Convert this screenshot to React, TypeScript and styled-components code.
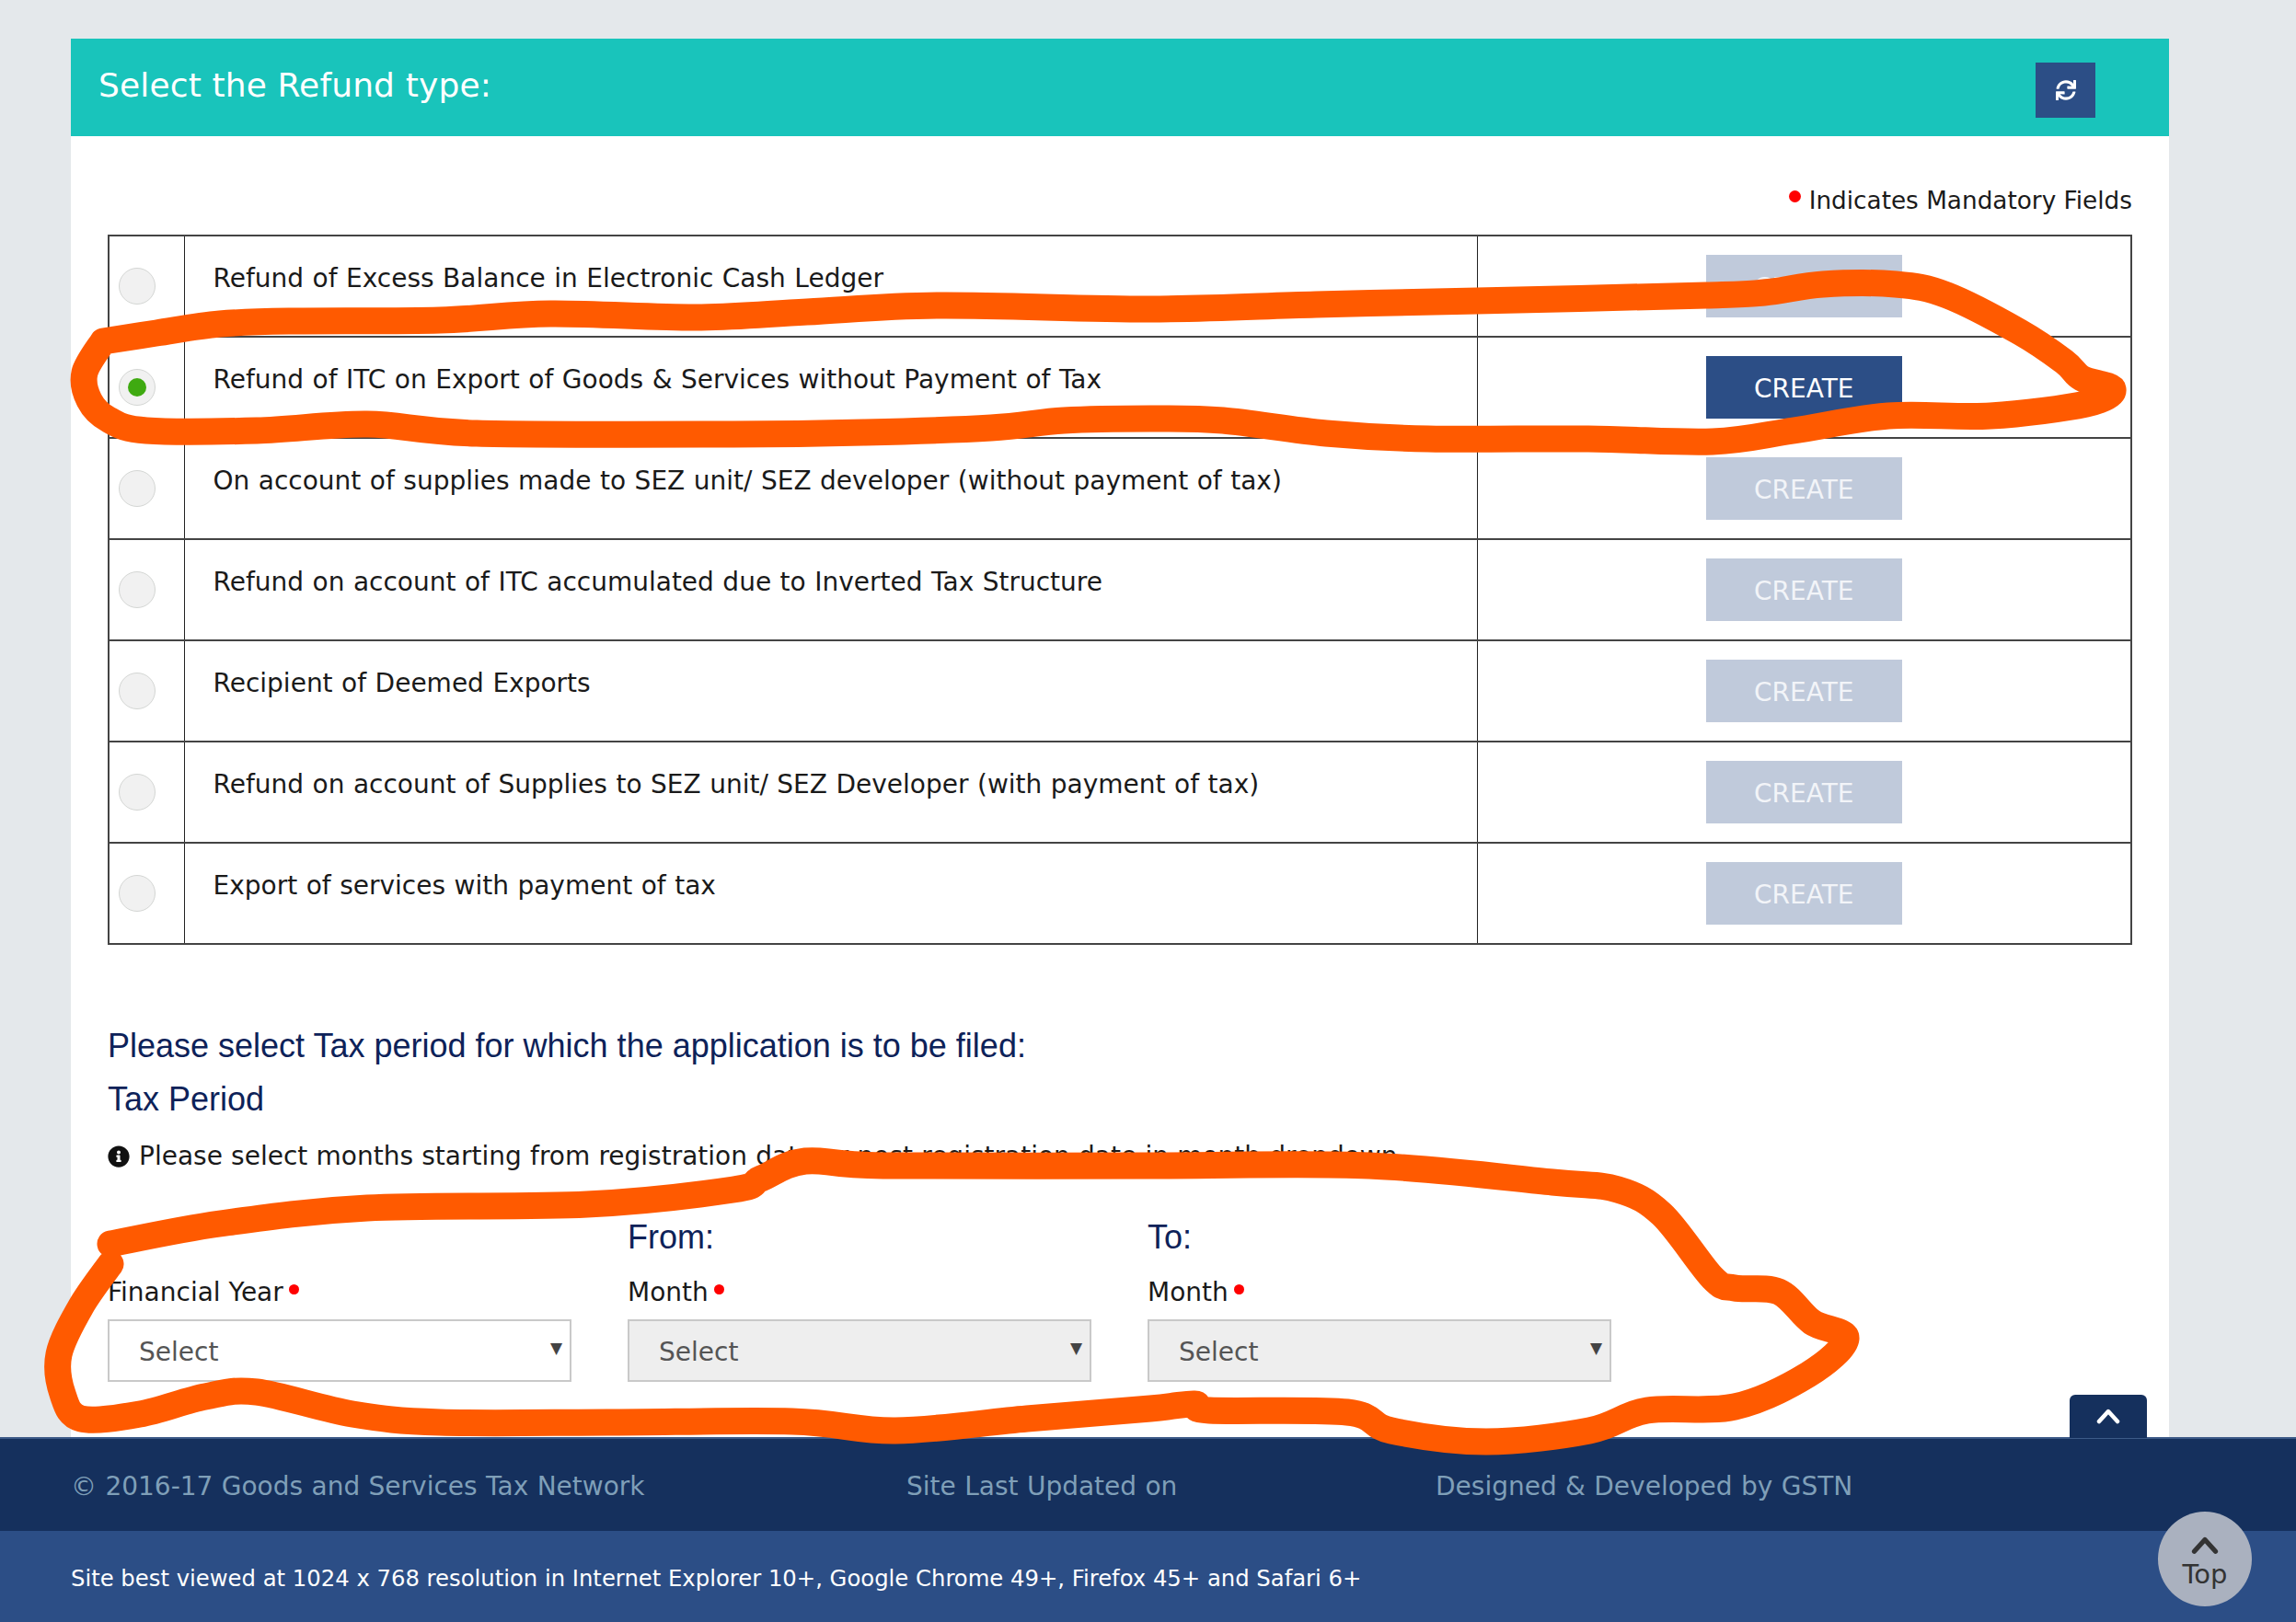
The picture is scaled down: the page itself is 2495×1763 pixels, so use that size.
import React from "react";
import styled, { createGlobalStyle } from "styled-components";
import { FaInfoCircle, FaSync } from "react-icons/fa";

const REFUND_TYPES = [
  "Refund of Excess Balance in Electronic Cash Ledger",
  "Refund of ITC on Export of Goods & Services without Payment of Tax",
  "On account of supplies made to SEZ unit/ SEZ developer (without payment of tax)",
  "Refund on account of ITC accumulated due to Inverted Tax Structure",
  "Recipient of Deemed Exports",
  "Refund on account of Supplies to SEZ unit/ SEZ Developer (with payment of tax)",
  "Export of services with payment of tax",
];

const SELECTED_ROW = 1;

const RING_TOP: number[][] = [
  [112, 371], [170, 362], [239, 352], [320, 349], [478, 348], [598, 341], [758, 345], [877, 339],
  [1021, 332], [1250, 336], [1430, 331], [1605, 327], [1854, 321], [1917, 318], [1981, 309], [2060, 309],
  [2116, 321], [2195, 361], [2243, 393], [2262, 411], [2296, 423], [2267, 439], [2163, 452],
  [2052, 452], [1949, 468], [1861, 480], [1726, 477], [1552, 477], [1441, 471], [1329, 457],
  [1250, 455], [1156, 457], [1077, 465], [940, 470], [797, 472], [518, 471], [399, 461], [279, 468],
  [159, 468], [118, 456], [97, 435], [92, 405], [112, 371],
];

const RING_BOTTOM: number[][] = [
  [120, 1352], [239, 1330], [399, 1313], [638, 1309], [797, 1293], [827, 1281], [875, 1262], [960, 1267],
  [1250, 1267], [1488, 1267], [1687, 1285], [1758, 1293], [1806, 1320], [1861, 1389], [1885, 1400],
  [1933, 1404], [1969, 1437], [2006, 1455], [1965, 1494], [1885, 1529], [1790, 1533], [1727, 1555],
  [1615, 1567], [1512, 1555], [1464, 1535], [1314, 1533], [1298, 1526], [1250, 1531], [1116, 1542],
  [973, 1555], [861, 1545], [660, 1546], [478, 1546], [383, 1537], [279, 1513], [223, 1518], [152, 1537],
  [88, 1542], [68, 1515], [64, 1472], [88, 1420], [120, 1374],
];

// catmull-rom through the hand-drawn marker points
function markerPath(points: number[][]) {
  let d = `M${points[0][0]} ${points[0][1]}`;
  for (let i = 0; i < points.length - 1; i++) {
    const p0 = points[i - 1] ?? points[i];
    const p1 = points[i];
    const p2 = points[i + 1];
    const p3 = points[i + 2] ?? p2;
    const c1x = p1[0] + (p2[0] - p0[0]) / 6;
    const c1y = p1[1] + (p2[1] - p0[1]) / 6;
    const c2x = p2[0] - (p3[0] - p1[0]) / 6;
    const c2y = p2[1] - (p3[1] - p1[1]) / 6;
    d += ` C${c1x} ${c1y} ${c2x} ${c2y} ${p2[0]} ${p2[1]}`;
  }
  return d;
}

const GlobalStyle = createGlobalStyle`
  html, body {
    margin: 0;
    padding: 0;
    background: #e4e8eb;
  }
  * {
    box-sizing: border-box;
  }
`;

const Page = styled.div`
  position: relative;
  width: 2495px;
  height: 1763px;
  overflow: hidden;
  display: flex;
  flex-direction: column;
  padding-top: 42px;
  font-family: "DejaVu Sans", sans-serif;
  color: #1a1a1a;
`;

const Card = styled.main`
  width: 2280px;
  height: 1520px;
  margin-left: 77px;
  background: #fff;
  flex-shrink: 0;
`;

const CardHeader = styled.header`
  height: 106px;
  background: #19c4bb;
  display: flex;
  align-items: center;
  justify-content: space-between;
  padding: 0 80px 0 30px;
`;

const CardTitle = styled.h1`
  margin: 0 0 6px;
  font-size: 36px;
  font-weight: 400;
  letter-spacing: 0.14px;
  color: #fff;
`;

const RefreshButton = styled.button`
  width: 65px;
  height: 60px;
  margin-top: 6px;
  border: none;
  background: #2c4e86;
  color: #fff;
  display: flex;
  align-items: center;
  justify-content: center;
  font-size: 22px;
`;

const CardBody = styled.div`
  padding: 0 40px;
`;

const MandatoryNote = styled.p`
  margin: 0;
  height: 107px;
  display: flex;
  justify-content: flex-end;
  align-items: center;
  gap: 9px;
  padding-top: 32px;
  font-size: 26.3px;
`;

const RedDot = styled.span<{ $size: number }>`
  display: inline-block;
  width: ${(p) => p.$size}px;
  height: ${(p) => p.$size}px;
  border-radius: 50%;
  background: #f00;
`;

const NoteDot = styled(RedDot)`
  margin-top: -8px;
`;

const RefundTable = styled.table`
  width: 2200px;
  border-collapse: collapse;
  table-layout: fixed;
`;

const Row = styled.tr`
  height: 110px;
  border: 2px solid #444;
`;

const RadioCell = styled.td`
  width: 82px;
  padding: 0 0 0 10px;
  border-right: 1px solid #222;
`;

const LabelCell = styled.td`
  padding: 0 0 18px 31px;
  font-size: 28px;
  word-spacing: 0.6px;
  border-right: 1px solid #222;
`;

const ActionCell = styled.td`
  width: 711px;
  padding: 0;
`;

const ActionInner = styled.div`
  display: flex;
  justify-content: center;
`;

const Radio = styled.span<{ $checked: boolean }>`
  display: inline-flex;
  align-items: center;
  justify-content: center;
  width: 40px;
  height: 40px;
  border-radius: 50%;
  background: #f1f1f1;
  border: 1px solid #d4d6d4;
  vertical-align: middle;
  &::after {
    content: "";
    display: ${(p) => (p.$checked ? "block" : "none")};
    width: 20px;
    height: 20px;
    border-radius: 50%;
    background: #3faa11;
  }
`;

const CreateButton = styled.button<{ $active: boolean }>`
  width: 213px;
  height: 68px;
  padding: 2px 0 0;
  border: none;
  background: ${(p) => (p.$active ? "#2c4e86" : "#c0cadb")};
  color: ${(p) => (p.$active ? "#fff" : "#f2f4f8")};
  font-family: "DejaVu Sans", sans-serif;
  font-size: 28px;
`;

const SectionTitle = styled.h2`
  margin: 0;
  font-family: "Liberation Sans", Arial, sans-serif;
  font-size: 36px;
  font-weight: 400;
  color: #0d2259;
  line-height: 58px;
`;

const PeriodTitle = styled(SectionTitle)`
  margin-top: 81px;
`;

const InfoLine = styled.p`
  margin: 4px 0 0;
  display: flex;
  align-items: center;
  gap: 10px;
  font-size: 28px;
  word-spacing: 0.35px;
  line-height: 58px;
  svg {
    width: 24px;
    height: 24px;
    color: #111;
  }
`;

const PeriodGrid = styled.div`
  display: grid;
  grid-template-columns: repeat(3, 504px);
  column-gap: 61px;
  margin-top: 30px;
`;

const PeriodField = styled.div`
  display: flex;
  flex-direction: column;
`;

const FieldHeading = styled.div`
  height: 58px;
  font-family: "Liberation Sans", Arial, sans-serif;
  font-size: 36px;
  color: #0d2259;
  line-height: 58px;
`;

const FieldLabel = styled.label`
  display: flex;
  height: 60px;
  align-items: center;
  gap: 6px;
  font-size: 28px;
`;

const LabelDot = styled(RedDot)`
  margin-top: -6px;
`;

const SelectBox = styled.div<{ $disabled: boolean }>`
  height: 68px;
  display: flex;
  align-items: center;
  justify-content: space-between;
  padding: 2px 8px 0 32px;
  border: 2px solid #c9c9c9;
  background: ${(p) => (p.$disabled ? "#eeeeee" : "#fff")};
  font-size: 28px;
  color: #555;
`;

const Caret = styled.span`
  font-size: 17px;
  color: #444;
  margin-top: -8px;
`;

const BackTab = styled.button`
  position: absolute;
  left: 2249px;
  top: 1516px;
  width: 84px;
  height: 47px;
  border: none;
  border-radius: 6px 6px 0 0;
  background: #15305d;
  padding: 0;
  display: flex;
  align-items: center;
  justify-content: center;
`;

const FooterTop = styled.footer`
  height: 102px;
  flex-shrink: 0;
  background: #15305d;
  border-top: 2px solid #3c5a87;
  display: grid;
  grid-template-columns: 908px 575px 1fr;
  align-items: center;
  padding: 2px 0 0 77px;
  font-size: 28px;
  word-spacing: 0.5px;
  color: #7f9fb8;
`;

const FooterBottom = styled.div`
  flex: 1;
  background: #2c4e86;
  display: flex;
  align-items: center;
  padding: 3px 0 0 77px;
  font-size: 24.3px;
  color: #fff;
`;

const TopBubble = styled.button`
  position: absolute;
  left: 2345px;
  top: 1643px;
  width: 102px;
  height: 103px;
  border: none;
  border-radius: 50%;
  background: #aab1bf;
  color: #333;
  font-family: "DejaVu Sans", sans-serif;
  font-size: 29px;
  display: flex;
  flex-direction: column;
  align-items: center;
  justify-content: flex-start;
  gap: 5px;
  line-height: 34px;
  padding: 27px 0 0;
`;

const MarkerLayer = styled.svg`
  position: absolute;
  inset: 0;
  pointer-events: none;
`;

function Chevron({ color, width }: { color: string; width: number }) {
  return (
    <svg width={width} height={width * 0.62} viewBox="0 0 26 16" fill="none">
      <path d="M3 14 L13 3 L23 14" stroke={color} strokeWidth="4.5" strokeLinecap="round" strokeLinejoin="round" />
    </svg>
  );
}

export default function App() {
  return (
    <Page>
      <GlobalStyle />
      <Card>
        <CardHeader>
          <CardTitle>Select the Refund type:</CardTitle>
          <RefreshButton aria-label="Refresh">
            <FaSync />
          </RefreshButton>
        </CardHeader>
        <CardBody>
          <MandatoryNote>
            <NoteDot $size={13} />
            Indicates Mandatory Fields
          </MandatoryNote>
          <RefundTable>
            <tbody>
              {REFUND_TYPES.map((label, index) => (
                <Row key={label}>
                  <RadioCell>
                    <Radio $checked={index === SELECTED_ROW} />
                  </RadioCell>
                  <LabelCell>{label}</LabelCell>
                  <ActionCell>
                    <ActionInner>
                      <CreateButton $active={index === SELECTED_ROW}>CREATE</CreateButton>
                    </ActionInner>
                  </ActionCell>
                </Row>
              ))}
            </tbody>
          </RefundTable>
          <PeriodTitle>Please select Tax period for which the application is to be filed:</PeriodTitle>
          <SectionTitle>Tax Period</SectionTitle>
          <InfoLine>
            <FaInfoCircle />
            Please select months starting from registration date or post registration date in month dropdown
          </InfoLine>
          <PeriodGrid>
            <PeriodField>
              <FieldHeading />
              <FieldLabel>
                Financial Year
                <LabelDot $size={11} />
              </FieldLabel>
              <SelectBox $disabled={false}>
                Select
                <Caret>▼</Caret>
              </SelectBox>
            </PeriodField>
            <PeriodField>
              <FieldHeading>From:</FieldHeading>
              <FieldLabel>
                Month
                <LabelDot $size={11} />
              </FieldLabel>
              <SelectBox $disabled>
                Select
                <Caret>▼</Caret>
              </SelectBox>
            </PeriodField>
            <PeriodField>
              <FieldHeading>To:</FieldHeading>
              <FieldLabel>
                Month
                <LabelDot $size={11} />
              </FieldLabel>
              <SelectBox $disabled>
                Select
                <Caret>▼</Caret>
              </SelectBox>
            </PeriodField>
          </PeriodGrid>
        </CardBody>
      </Card>
      <FooterTop>
        <span>© 2016-17 Goods and Services Tax Network</span>
        <span>Site Last Updated on</span>
        <span>Designed &amp; Developed by GSTN</span>
      </FooterTop>
      <FooterBottom>
        Site best viewed at 1024 x 768 resolution in Internet Explorer 10+, Google Chrome 49+, Firefox 45+ and Safari 6+
      </FooterBottom>
      <BackTab aria-label="Back to top">
        <Chevron color="#fff" width={26} />
      </BackTab>
      <TopBubble>
        <Chevron color="#333" width={30} />
        Top
      </TopBubble>
      <MarkerLayer width="2495" height="1763" viewBox="0 0 2495 1763" fill="none">
        <path d={markerPath(RING_TOP)} stroke="#ff5a00" strokeWidth="29" strokeLinecap="round" strokeLinejoin="round" />
        <path d={markerPath(RING_BOTTOM)} stroke="#ff5a00" strokeWidth="29" strokeLinecap="round" strokeLinejoin="round" />
      </MarkerLayer>
    </Page>
  );
}
